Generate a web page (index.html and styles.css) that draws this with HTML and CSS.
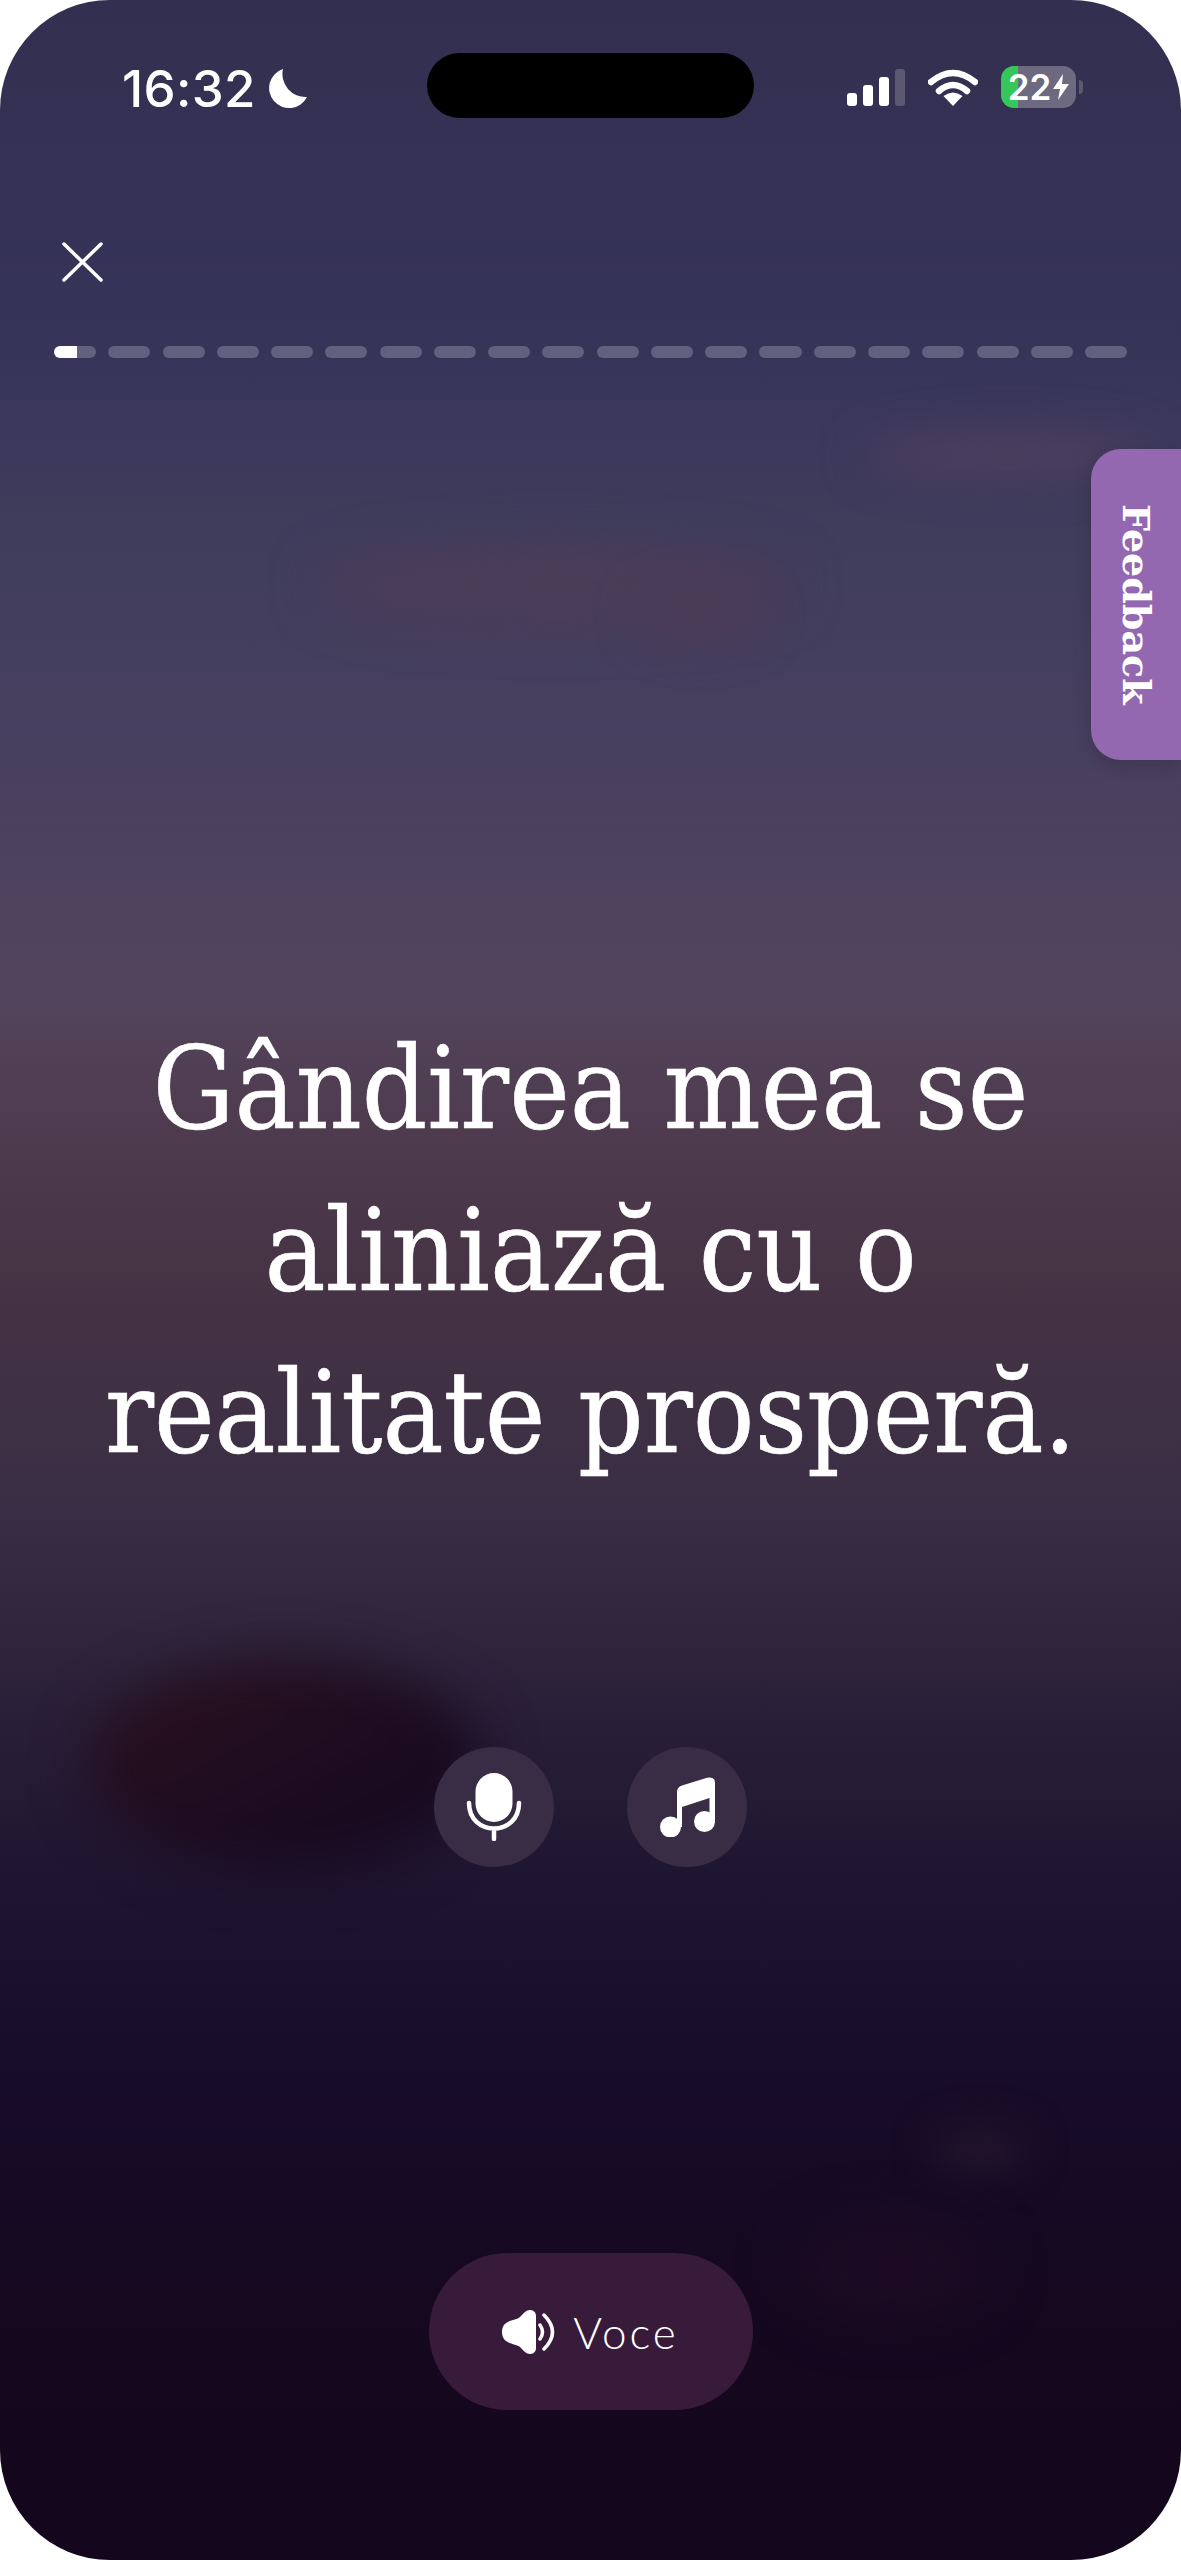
FILE: index.html
```html
<!DOCTYPE html>
<html>
<head>
    <title>Afirmatie</title>
    <link rel="stylesheet" href="styles.css">
</head>
<body>
    <div class="screen">
        <!-- pete neclare din fundal -->
        <div class="blob blob-streak"></div>
        <div class="blob blob-spot"></div>
        <div class="blob blob-streak-right"></div>
        <div class="blob blob-dark"></div>
        <div class="blob blob-low"></div>
        <div class="blob blob-low-spot"></div>

        <div class="status-bar">
            <div class="status-left">
                <span class="time">16:32</span>
                <svg class="moon" viewBox="0 0 40 40"><path d="M16 0A20 20 0 1 0 40 28A23 23 0 0 1 16 0Z"/></svg>
            </div>
            <div class="island"></div>
            <div class="status-right">
                <div class="signal">
                    <span class="bar bar-1"></span>
                    <span class="bar bar-2"></span>
                    <span class="bar bar-3"></span>
                    <span class="bar bar-4"></span>
                </div>
                <svg class="wifi" viewBox="0 0 50 37">
                    <path class="wifi-arc" d="M3 13Q25 -5 47 13"/>
                    <path class="wifi-arc" d="M11 22Q25 10 39 22"/>
                    <path class="wifi-dot" d="M25 37L15.500 27Q25 20 34.500 27Z"/>
                </svg>
                <div class="battery">
                    <span class="battery-text">22</span>
                    <svg class="bolt" viewBox="0 0 16 26"><path d="M10 0L0 15H7L5 26L16 10H9Z"/></svg>
                </div>
                <span class="battery-nub"></span>
            </div>
        </div>

        <svg class="close" viewBox="0 0 41 40"><path d="M2 2L39 38M39 2L2 38"/></svg>

        <div class="progress">
            <span class="segment segment-active"></span>
            <span class="segment"></span><span class="segment"></span><span class="segment"></span>
            <span class="segment"></span><span class="segment"></span><span class="segment"></span>
            <span class="segment"></span><span class="segment"></span><span class="segment"></span>
            <span class="segment"></span><span class="segment"></span><span class="segment"></span>
            <span class="segment"></span><span class="segment"></span><span class="segment"></span>
            <span class="segment"></span><span class="segment"></span><span class="segment"></span>
            <span class="segment"></span>
        </div>

        <h1 class="affirmation">Gândirea mea se<br>aliniază cu o<br>realitate prosperă.</h1>

        <div class="controls">
            <div class="round-btn">
                <svg class="mic" viewBox="0 0 56 68">
                    <rect x="9.500" y="0" width="37" height="49" rx="18.500"/>
                    <path class="mic-line" d="M3 30C3 64 53 64 53 30M28 57V66"/>
                </svg>
            </div>
            <div class="round-btn">
                <svg class="note" viewBox="0 0 55 60">
                    <path d="M17 15Q17 10 22 8.500L47 .8Q55 -1 55 6V46H49.500V21L22 30V50H17Z"/>
                    <circle cx="10.500" cy="50" r="10.500"/>
                    <circle cx="44.500" cy="44.500" r="10.500"/>
                </svg>
            </div>
        </div>

        <div class="voice-btn">
            <svg class="speaker" viewBox="0 0 53 44">
                <path d="M34 6C34 1 30 0 28 0C24 0 22 3 18 7C14 11 0 9 0 22C0 35 14 33 18 37C22 41 24 44 28 44C30 44 34 43 34 38Z"/>
                <path class="speaker-wave" d="M38 15Q43 22 38 29M42 5Q59 22 42 39"/>
            </svg>
            <span class="voice-label">Voce</span>
        </div>

        <div class="feedback"><span class="feedback-text">Feedback</span></div>
    </div>
</body>
</html>
```

FILE: styles.css
```css
body {
    margin: 0;
    padding: 0;
    background: #fff;
}

.screen {
    position: relative;
    width: 1181px;
    height: 2560px;
    overflow: hidden;
    border-radius: 110px;
    background: linear-gradient(to bottom,
        #332f50 0,
        #37345a 350px,
        #3f3c5c 520px,
        #4a4160 800px,
        #53445c 1000px,
        #4f3c50 1110px,
        #463344 1280px,
        #3a2e45 1500px,
        #2a2038 1700px,
        #1d1430 1900px,
        #170c28 2100px,
        #15081f 2300px,
        #14061c 2560px);
}

/* fundal */
.blob {
    position: absolute;
    border-radius: 50%;
}

.blob-streak {
    left: 320px;
    top: 550px;
    width: 470px;
    height: 70px;
    background: #4c3d58;
    filter: blur(26px);
}

.blob-spot {
    left: 640px;
    top: 590px;
    width: 120px;
    height: 50px;
    background: #4c3b57;
    filter: blur(22px);
}

.blob-streak-right {
    left: 860px;
    top: 430px;
    width: 300px;
    height: 50px;
    background: #4b3e5e;
    filter: blur(20px);
}

.blob-dark {
    left: 85px;
    top: 1660px;
    width: 400px;
    height: 215px;
    background: linear-gradient(to bottom right, #2c1220, #190a20 70%);
    filter: blur(26px);
}

.blob-low {
    left: 790px;
    top: 2220px;
    width: 200px;
    height: 100px;
    background: #1c0b23;
    filter: blur(26px);
}

.blob-low-spot {
    left: 930px;
    top: 2125px;
    width: 100px;
    height: 50px;
    background: #21132a;
    filter: blur(18px);
}

/* bara de stare */
.status-bar {
    position: relative;
    display: grid;
    grid-template-columns: 427px 327px 1fr;
    align-items: center;
    padding-top: 53px;
    height: 65px;
}

.status-left {
    display: flex;
    align-items: center;
    gap: 11px;
    padding-left: 122px;
    padding-top: 6px;
}

.time {
    font-family: "Inter", sans-serif;
    font-weight: 500;
    font-size: 51px;
    line-height: 50px;
    letter-spacing: 0.300px;
    color: #fff;
}

.moon {
    width: 40px;
    height: 40px;
    fill: #fff;
}

.island {
    height: 65px;
    border-radius: 33px;
    background: #000;
}

.status-right {
    display: flex;
    align-items: center;
    padding-left: 93px;
    padding-top: 3px;
}

.signal {
    display: flex;
    align-items: flex-end;
    gap: 6px;
    height: 37px;
}

.bar {
    width: 10px;
    border-radius: 3px;
    background: #fff;
}

.bar-1 { height: 13px; }
.bar-2 { height: 21px; }
.bar-3 { height: 29px; }
.bar-4 { height: 37px; background: #5b5870; }

.wifi {
    width: 50px;
    height: 37px;
    margin-left: 23px;
}

.wifi-arc {
    fill: none;
    stroke: #fff;
    stroke-width: 6.500;
    stroke-linecap: round;
}

.wifi-dot {
    fill: #fff;
}

.battery {
    display: flex;
    align-items: center;
    justify-content: center;
    gap: 2px;
    width: 75px;
    height: 42px;
    margin-left: 23px;
    border-radius: 13px;
    background: linear-gradient(to right, #35c759 17px, #6c6980 17px);
}

.battery-text {
    font-family: "Inter", sans-serif;
    font-weight: 600;
    font-size: 35px;
    line-height: 42px;
    color: #fff;
}

.bolt {
    width: 16px;
    height: 26px;
    fill: #fff;
}

.battery-nub {
    width: 4px;
    height: 14px;
    margin-left: 3px;
    border-radius: 0 4px 4px 0;
    background: #5b5870;
}

/* inchidere si progres */
.close {
    position: relative;
    display: block;
    width: 41px;
    height: 40px;
    margin: 124px 0 0 62px;
    fill: none;
    stroke: #fff;
    stroke-width: 3.500;
    stroke-linecap: round;
}

.progress {
    position: relative;
    display: flex;
    gap: 12.200px;
    margin-top: 64px;
    padding: 0 54px;
}

.segment {
    flex: 1;
    height: 12px;
    border-radius: 6px;
    background: rgba(255, 255, 255, 0.22);
}

.segment-active {
    background: linear-gradient(to right, #fff 55%, rgba(255, 255, 255, 0.22) 55%);
}

/* text */
.affirmation {
    position: relative;
    margin: 650px 0 0;
    font-family: "DejaVu Serif Condensed", "DejaVu Serif", serif;
    font-stretch: condensed;
    font-weight: 400;
    font-size: 114px;
    line-height: 162px;
    text-align: center;
    color: #fff;
    -webkit-text-stroke: 0.6px #fff;
}

.controls {
    position: relative;
    display: flex;
    justify-content: center;
    gap: 73px;
    margin-top: 253px;
}

.round-btn {
    display: flex;
    align-items: center;
    justify-content: center;
    width: 120px;
    height: 120px;
    border-radius: 50%;
    background: #392d45;
}

.mic {
    width: 56px;
    height: 68px;
    fill: #fff;
}

.mic-line {
    fill: none;
    stroke: #fff;
    stroke-width: 4.500;
    stroke-linecap: round;
}

.note {
    width: 55px;
    height: 60px;
    fill: #fff;
}

.voice-btn {
    position: relative;
    display: flex;
    align-items: center;
    justify-content: center;
    gap: 18px;
    width: 324px;
    height: 157px;
    margin: 386px auto 0;
    border-radius: 79px;
    background: #381b3a;
}

.speaker {
    width: 53px;
    height: 44px;
    fill: #fff;
}

.speaker-wave {
    fill: none;
    stroke: #fff;
    stroke-width: 3.500;
    stroke-linecap: round;
}

.voice-label {
    font-family: "Lato", sans-serif;
    font-weight: 300;
    font-size: 44px;
    letter-spacing: 3px;
    color: #fff;
}

/* tab lateral */
.feedback {
    position: absolute;
    top: 449px;
    right: 0;
    display: flex;
    align-items: center;
    justify-content: center;
    width: 90px;
    height: 311px;
    border-radius: 30px 0 0 30px;
    background: #9468b0;
    box-shadow: 0 6px 16px rgba(30, 20, 40, 0.25);
}

.feedback-text {
    writing-mode: vertical-rl;
    font-family: "DejaVu Serif", serif;
    font-weight: 700;
    font-size: 38px;
    color: #fff;
}
```
